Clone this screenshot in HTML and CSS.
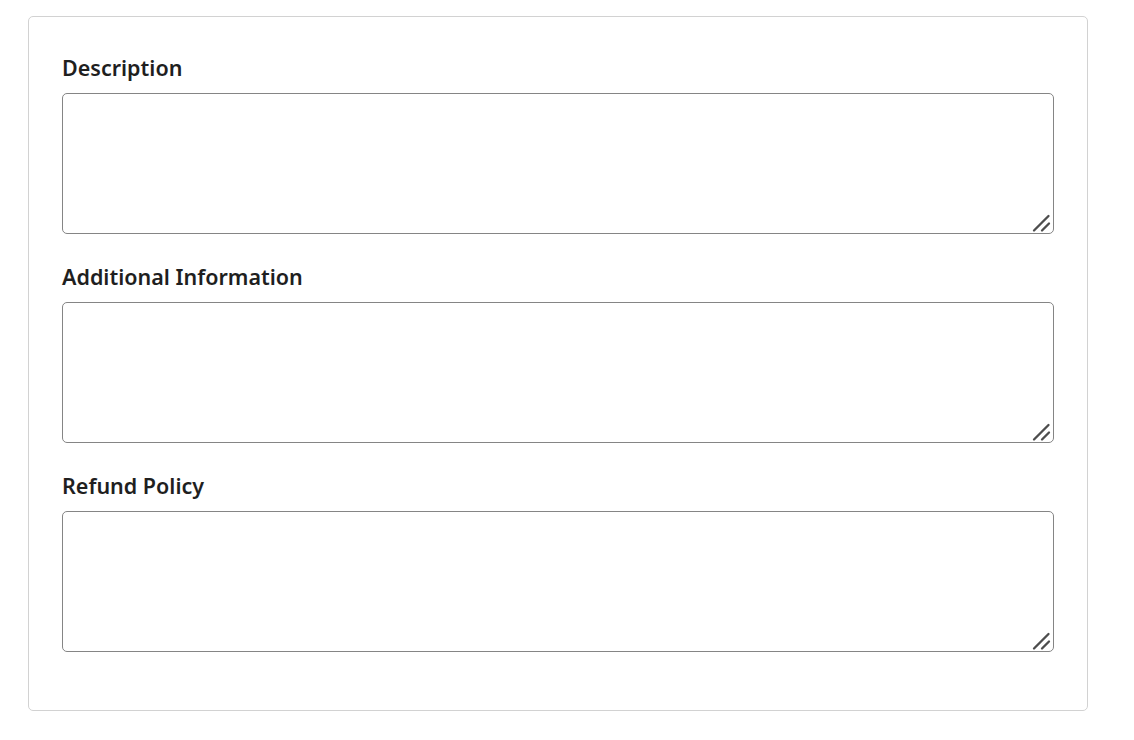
FILE: index.html
```html
<!DOCTYPE html>
<html lang="en">
<head>
<meta charset="utf-8">
<title>Form</title>
<link rel="stylesheet" href="styles.css">
</head>
<body>
<div class="card">
  <div class="field">
    <label class="label" for="d">Description</label>
    <div class="box">
      <textarea id="d" class="input"></textarea>
      <svg class="grip" width="20" height="20" viewBox="0 0 20 20" aria-hidden="true"><path d="M2 17.5 L16.5 3 M10 17.5 L17 10.5" stroke="#4d4d4d" stroke-width="2.3" stroke-linecap="round" fill="none"/></svg>
    </div>
  </div>
  <div class="field">
    <label class="label" for="a">Additional Information</label>
    <div class="box">
      <textarea id="a" class="input"></textarea>
      <svg class="grip" width="20" height="20" viewBox="0 0 20 20" aria-hidden="true"><path d="M2 17.5 L16.5 3 M10 17.5 L17 10.5" stroke="#4d4d4d" stroke-width="2.3" stroke-linecap="round" fill="none"/></svg>
    </div>
  </div>
  <div class="field">
    <label class="label" for="r">Refund Policy</label>
    <div class="box">
      <textarea id="r" class="input"></textarea>
      <svg class="grip" width="20" height="20" viewBox="0 0 20 20" aria-hidden="true"><path d="M2 17.5 L16.5 3 M10 17.5 L17 10.5" stroke="#4d4d4d" stroke-width="2.3" stroke-linecap="round" fill="none"/></svg>
    </div>
  </div>
</div>
</body>
</html>
```

FILE: styles.css
```css
html, body {
  margin: 0;
  padding: 0;
  background: #ffffff;
}
body {
  padding: 16px 46px 0 28px;
  font-family: "Noto Sans", "Open Sans", sans-serif;
  color: #212529;
}
.card {
  border: 1px solid #d2d2d2;
  border-radius: 5px;
  padding: 39px 33px 27px 33px;
  width: 992px;
  box-sizing: content-box;
}
.field {
  display: flex;
  flex-direction: column;
  margin-bottom: 31px;
}
.label {
  display: block;
  font-size: 21.5px;
  line-height: 24px;
  font-weight: 600;
  color: #1f1f1f;
  margin-bottom: 13px;
}
.box {
  position: relative;
  width: 992px;
  height: 141px;
}
.input {
  display: block;
  box-sizing: border-box;
  width: 992px;
  height: 141px;
  margin: 0;
  border: 1px solid #858585;
  border-radius: 5px;
  background: #fff;
  font-family: inherit;
  font-size: 16px;
  resize: none;
  outline: none;
}
.grip {
  position: absolute;
  right: 2px;
  bottom: 1px;
  pointer-events: none;
}
```
